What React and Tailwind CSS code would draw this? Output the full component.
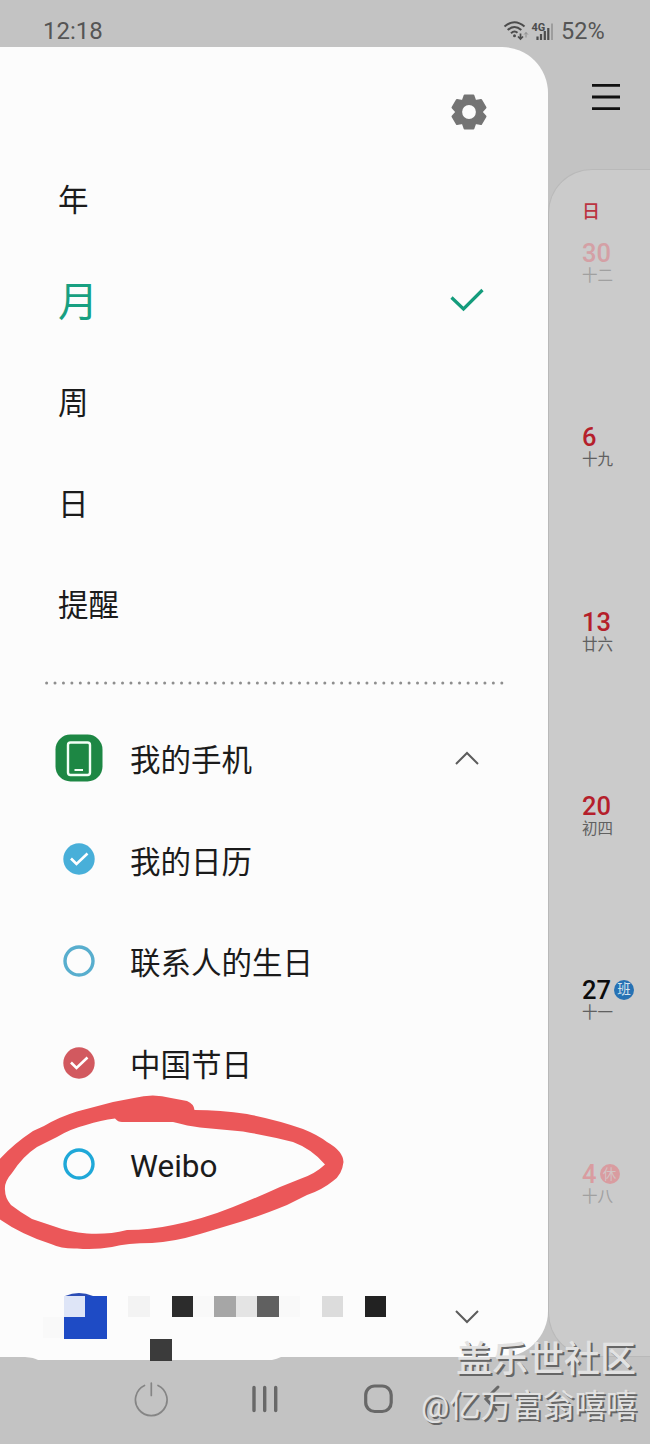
import React from "react";

const CJK = "font-['Roboto','Noto_Sans_CJK_SC',sans-serif]";

const views = ["年", "月", "周", "日", "提醒"];

const days = [
  { n: "30", l: "十二", c: "text-[#d4a0a5]", s: "text-[#a0a0a0]" },
  { n: "6", l: "十九", c: "text-[#b51f2b]", s: "text-[#606060]" },
  { n: "13", l: "廿六", c: "text-[#b51f2b]", s: "text-[#606060]" },
  { n: "20", l: "初四", c: "text-[#b51f2b]", s: "text-[#606060]" },
  { n: "27", l: "十一", c: "text-[#0c0c0c]", s: "text-[#606060]", b: "班", bc: "bg-[#2672b4] text-[#d5e3ee]" },
  { n: "4", l: "十八", c: "text-[#d99ca0]", s: "text-[#a0a0a0]", b: "休", bc: "bg-[#d99ca0] text-[#d2c3c4]" },
];

function StatusIcons() {
  return (
    <svg width="52" height="24" viewBox="502 17.500 52 24" fill="none" stroke="#4c4c4c">
      <g strokeWidth="2.100">
        <path d="M504.500 25Q514.500 16.500 524.500 25" />
        <path d="M507.700 28.500Q514.500 22.500 521.300 28.500" />
        <path d="M511 31.700Q514.500 28.500 517.500 31.300" />
      </g>
      <circle cx="514.500" cy="34.300" r="1.500" fill="#4c4c4c" stroke="none" />
      <path d="M520.500 32v5M518 35l2.500 2.500L523 35" strokeWidth="1.700" />
      <path d="M526 36v-5M524.200 33l1.800-2 1.800 2" stroke="#8b8b8b" />
      <text x="531.500" y="29" fontFamily="Roboto, sans-serif" fontWeight="700" fontSize="11" fill="#4c4c4c" stroke="none">4G</text>
      <path d="M537.500 35v3.500M541 32.500v6M544.800 29.500v9M548.300 26.500v12" strokeWidth="2.200" />
      <path d="M552 22v16.500" strokeWidth="1.800" stroke="#999" />
    </svg>
  );
}

function Gear() {
  return (
    <svg width="36" height="36" viewBox="-18 -18 36 36" fill="#747474">
      <circle r="13.300" />
      {[0, 60, 120, 180, 240, 300].map((a) => (
        <path key={a} d="M-6.300 -11L-4.400 -16.500H4.400L6.300 -11z" transform={`rotate(${a})`} stroke="#747474" strokeWidth="2" strokeLinejoin="round" />
      ))}
      <circle r="6.900" fill="#fcfcfc" />
    </svg>
  );
}

function Mark({ kind }) {
  if (kind === "phone")
    return (
      <svg width="48" height="48" viewBox="0 0 48 48">
        <rect x="0.500" y="0.500" width="47" height="47" rx="15" fill="#1d8744" />
        <rect x="13" y="8.500" width="22" height="32.500" rx="2.500" fill="none" stroke="#f2fff6" strokeWidth="2.400" />
        <path d="M19.500 36h8.500" stroke="#f2fff6" strokeWidth="2" />
      </svg>
    );
  const checked = kind === "blue" || kind === "red";
  return (
    <svg width="32" height="32" viewBox="0 0 32 32" fill="none">
      {checked ? (
        <>
          <circle cx="16" cy="16" r="15.700" fill={kind === "blue" ? "#48afd9" : "#d2595f"} />
          <path d="M8 15.500l5.500 5.500L24.500 10.500" stroke="#fff" strokeWidth="2.600" />
        </>
      ) : (
        <circle cx="16" cy="16" r="14" stroke={kind === "weibo" ? "#1fa8d8" : "#58aece"} strokeWidth="3.400" />
      )}
    </svg>
  );
}

function Row({ kind, label, children }) {
  return (
    <div className="flex h-[101.600px] items-center">
      <div className="flex w-[48px] justify-center"><Mark kind={kind} /></div>
      <div className={`ml-[27px] flex-1 leading-none ${kind === "weibo" ? "mt-[5px] text-[31.500px]" : "mt-[7px] text-[30.500px]"}`}>{label}</div>
      {children}
    </div>
  );
}

function Chevron({ up }) {
  return (
    <svg width="24" height="14" viewBox="0 0 24 14" fill="none" stroke="#5c5c5c" strokeWidth="2">
      <path d={up ? "M1 13L12 2L23 13" : "M1 1L12 12L23 1"} />
    </svg>
  );
}

const dots = Array.from({ length: 55 }, (_, i) => i);

export default function App() {
  return (
    <div className={`relative flex h-[1444px] w-[650px] flex-col overflow-hidden bg-[#c3c3c3] text-[#1b1b1b] ${CJK}`}>
      <header className="flex h-[47px] items-center pl-[43px] pt-[15px] text-[#555]">
        <span className="w-[459px] text-[24px] leading-none">12:18</span>
        <StatusIcons />
        <span className="ml-[7px] mt-[2px] text-[23.500px] leading-none">52%</span>
      </header>

      <main className="flex h-[1310px]">
        <section className="flex w-[548px] flex-col rounded-r-[46px] bg-[#fcfcfc] pl-[55px]">
          <div className="flex h-[102px] items-start pl-[396px] pt-[47px]"><Gear /></div>
          <nav>
            {views.map((v) => (
              <div key={v} className="flex h-[101.200px] items-center justify-between pl-[3px] pr-[64px]">
                <span className={v === "月" ? "mt-[5px] text-[40px] leading-none text-[#18a081]" : "mt-[4px] text-[30.500px] leading-none"}>{v}</span>
                {v === "月" && (
                  <svg className="-mt-[2px]" width="34" height="24" viewBox="0 0 34 24" fill="none" stroke="#149c7c" strokeWidth="3.200">
                    <path d="M1.500 9.500L13.500 21L32.500 2" />
                  </svg>
                )}
              </div>
            ))}
          </nav>
          <div className="flex h-[52px] items-center pt-[5px]">
            <svg className="-ml-[10px]" width="460" height="4" viewBox="0 0 460 4" fill="#8e8e8e">
              {dots.map((i) => <circle key={i} cx={1.600 + i * 8.430} cy="2" r="1.500" />)}
            </svg>
          </div>
          <div className="pr-[69px]">
            <Row kind="phone" label="我的手机"><Chevron up /></Row>
            <Row kind="blue" label="我的日历" />
            <Row kind="ring" label="联系人的生日" />
            <Row kind="red" label="中国节日" />
            <Row kind="weibo" label="Weibo" />
          </div>
          <div className="flex flex-1 items-end justify-end pb-[33px] pr-[69px]"><Chevron /></div>
        </section>

        <aside className="flex w-[102px] flex-col">
          <div className="flex h-[122px] items-start pl-[44px] pt-[36px]">
            <svg width="28" height="28" viewBox="0 0 28 28" stroke="#111" strokeWidth="2.800">
              <path d="M0 2.400h28M0 14h28M0 25.600h28" />
            </svg>
          </div>
          <div className="h-[1188px] rounded-l-[44px] border border-r-0 border-[#b9b9b9] bg-[#cbcbcb] pl-[33px] pt-[33px]">
            <div className="text-[18px] leading-[17px] font-medium text-[#bb3441]">日</div>
            <div className="mt-[20px]">
              {days.map((d) => (
                <div key={d.n} className="h-[184.300px]">
                  <div className="flex h-[26px] items-center gap-[3px]">
                    <span className={`text-[25.500px] leading-[26px] font-medium ${d.c}`}>{d.n}</span>
                    {d.b && <span className={`flex size-[20px] items-center justify-center rounded-full text-[13.500px] leading-none ${d.bc}`}>{d.b}</span>}
                  </div>
                  <div className={`mt-[1px] text-[15.500px] leading-[18px] ${d.s}`}>{d.l}</div>
                </div>
              ))}
            </div>
          </div>
        </aside>
      </main>

      <footer className="flex h-[87px] items-center pb-[2px] pl-[134px]">
        <svg width="370" height="40" viewBox="134 1380 370 40" fill="none" stroke="#686868" strokeLinecap="round">
          <path d="M144.500 1385.500A15.800 15.800 0 1 0 158 1385.500M151.300 1383v12.500" stroke="#858585" strokeWidth="1.700" />
          <path d="M254 1387.500v23M264.700 1387.500v23M275.700 1387.500v23" strokeWidth="3.400" />
          <rect x="365.700" y="1386" width="25.500" height="25.500" rx="9" strokeWidth="3.200" />
          <path d="M498 1387L486 1399L496 1410" strokeWidth="3" />
        </svg>
      </footer>

      {/* mosaic and hand-drawn marker laid over the drawer */}
      <svg className="absolute inset-0" width="650" height="1444" viewBox="0 0 650 1444">
        <path d="M25 1357Q34 1357.500 38 1360H272Q277 1359 281 1357z" fill="#fcfcfc" />
        <path d="M65 1296Q79 1290 93 1296z" fill="#2c4db5" />
        <g shapeRendering="crispEdges">
          <path fill="#1e4bc5" d="M64 1296h43v43H64z" />
          <path fill="#dee5f7" d="M64 1296h21v21H64z" />
          <path fill="#f9f9f9" d="M43 1317h21v21H43zM193 1296h21v21h-21zM279 1296h21v21h-21z" />
          <path fill="#f3f3f3" d="M128 1296h22v21h-22z" />
          <path fill="#2c2c2c" d="M172 1296h21v21h-21z" />
          <path fill="#a6a6a6" d="M214 1296h22v21h-22z" />
          <path fill="#e4e4e4" d="M236 1296h21v21h-21z" />
          <path fill="#606060" d="M257 1296h22v21h-22z" />
          <path fill="#dcdcdc" d="M322 1296h21v21h-21z" />
          <path fill="#222" d="M365 1296h21v21h-21z" />
          <path fill="#3b3b3b" d="M150 1339h22v22h-22z" />
        </g>
        <path fill="#eb5759" fillRule="evenodd" strokeLinejoin="round" d="M-2 1161Q12 1145 33 1131L44 1126Q59 1117 77 1111.500L113 1102L134 1098Q153 1093 171 1098L187 1101Q194 1104 194.500 1110Q220 1110 247 1114Q278 1120 303 1129Q318 1135 327 1142Q343 1151 343.500 1162Q342 1175 333 1181Q322 1190 307 1195L287 1205Q260 1216 240 1222L200 1234Q173 1242 152 1243Q127 1243 112 1247Q95 1250 77 1248.500Q62 1249 51 1244Q20 1234 -2 1218zM5 1190Q4 1182 12 1173Q23 1156 37 1147L57 1137Q70 1129 86 1125Q101 1120 115 1118.500Q118 1122 122 1122L173 1122Q188 1126 200 1127.500L243 1131.500Q270 1136 293 1142Q312 1149 325 1164.500Q315 1174 300 1179L280 1187Q256 1198 233 1207Q203 1219 173 1225Q150 1230 127 1230Q107 1235 87 1233.500Q69 1232 53 1226L32 1219Q20 1212 11 1205Q5 1198 5 1190z" />
      </svg>

      <div className="absolute bottom-[15px] right-[13px] text-right whitespace-nowrap text-[#e2e2e2] [text-shadow:2px_2px_0px_#666]">
        <div className="mr-[1px] text-[36px] leading-[46px] font-medium">盖乐世社区</div>
        <div className="mt-[2px] text-[31.300px] leading-[44px]">@亿万富翁嘻嘻</div>
      </div>
    </div>
  );
}
